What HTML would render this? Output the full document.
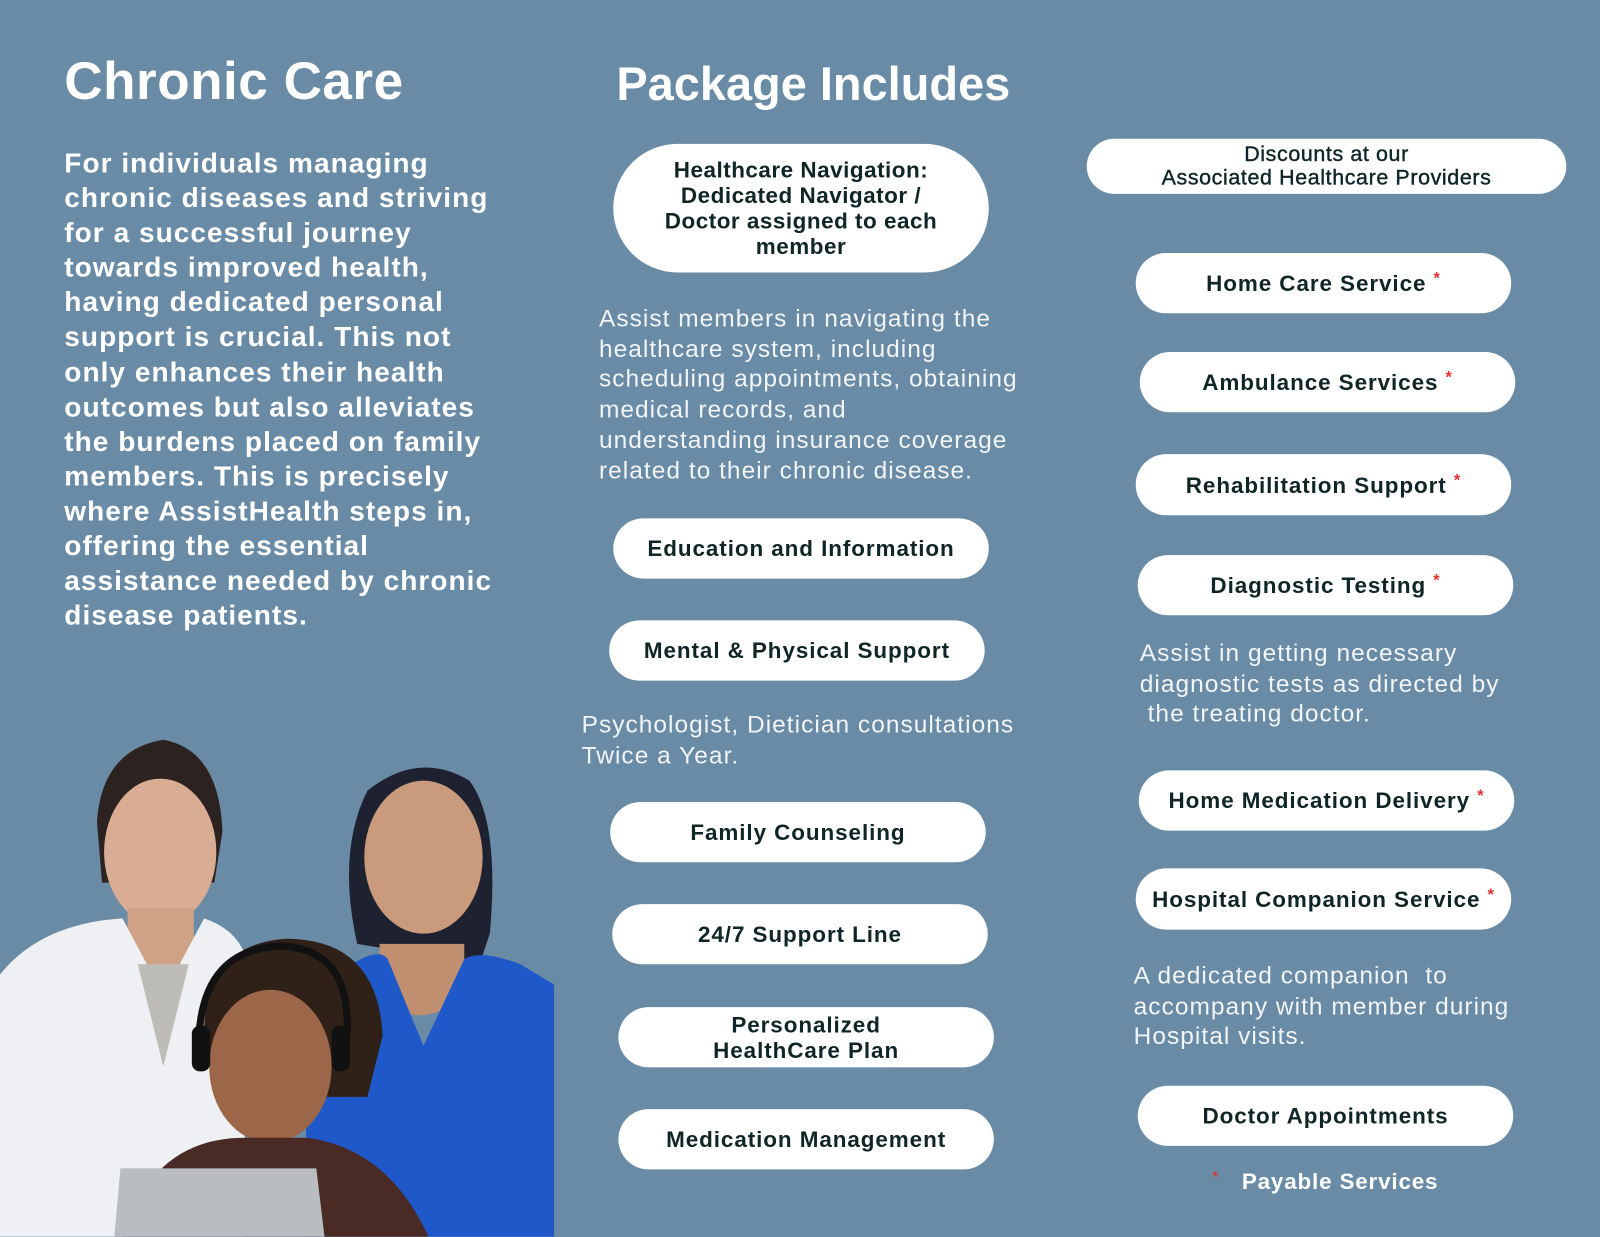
<!DOCTYPE html>
<html><head><meta charset="utf-8"><style>
html,body{margin:0;padding:0;width:1600px;height:1236px;overflow:hidden;background:#698ba5;}
#w{position:absolute;left:0;top:0;width:1568px;height:1212px;transform:scale(1.0204);transform-origin:0 0;font-family:"Liberation Sans",sans-serif;}
.a{position:absolute;}
h1{position:absolute;margin:0;color:#fff;font-weight:bold;}
.p{position:absolute;background:#fff;border-radius:32px;color:#0f2526;font-weight:bold;font-size:22px;display:flex;align-items:center;justify-content:center;text-align:center;line-height:25px;letter-spacing:0.9px;}
.p i{color:#e53030;font-style:normal;font-size:16px;margin-left:7px;position:relative;top:-4px;}
.t{position:absolute;color:#f2f5f8;font-size:24px;line-height:29.7px;letter-spacing:1px;}
</style></head><body><div id="w">
<h1 style="left:63px;top:50px;font-size:52px;letter-spacing:0.5px">Chronic Care</h1>
<div class="a" style="left:63px;top:143px;width:432px;color:#fff;font-weight:bold;font-size:27.5px;line-height:34.1px;letter-spacing:1px;">For individuals managing chronic diseases and striving for a successful journey towards improved health, having dedicated personal support is crucial. This not only enhances their health outcomes but also alleviates the burdens placed on family members. This is precisely where AssistHealth steps in, offering the essential assistance needed by chronic disease patients.</div>
<h1 style="left:604px;top:55px;font-size:46px;letter-spacing:0px">Package Includes</h1>

<div class="p" style="left:601px;top:141px;width:368px;height:126px;border-radius:63px;line-height:25px;letter-spacing:0.5px">Healthcare Navigation:<br>Dedicated Navigator /<br>Doctor assigned to each<br>member</div>
<div class="t" style="left:587px;top:298px;width:425px">Assist members in navigating the healthcare system, including scheduling appointments, obtaining medical records, and<br>understanding insurance coverage related to their chronic disease.</div>
<div class="p" style="left:601px;top:508px;width:368px;height:59px">Education and Information</div>
<div class="p" style="left:597px;top:608px;width:368px;height:59px">Mental &amp; Physical Support</div>
<div class="t" style="left:570px;top:696px;width:440px">Psychologist, Dietician consultations Twice a Year.</div>
<div class="p" style="left:598px;top:786px;width:368px;height:59px">Family Counseling</div>
<div class="p" style="left:600px;top:886px;width:368px;height:59px">24/7 Support Line</div>
<div class="p" style="left:606px;top:987px;width:368px;height:59px">Personalized<br>HealthCare Plan</div>
<div class="p" style="left:606px;top:1087px;width:368px;height:59px">Medication Management</div>

<div class="p" style="left:1065px;top:136px;width:470px;height:54px;font-weight:normal;font-size:21px;line-height:23px;letter-spacing:0.6px;-webkit-text-stroke:0.4px #0f2526">Discounts at our<br>Associated Healthcare Providers</div>
<div class="p" style="left:1113px;top:248px;width:368px;height:59px">Home Care Service<i>*</i></div>
<div class="p" style="left:1117px;top:345px;width:368px;height:59px">Ambulance Services<i>*</i></div>
<div class="p" style="left:1113px;top:445px;width:368px;height:60px">Rehabilitation Support<i>*</i></div>
<div class="p" style="left:1115px;top:544px;width:368px;height:59px">Diagnostic Testing<i>*</i></div>
<div class="t" style="left:1117px;top:626px;width:375px">Assist in getting necessary diagnostic tests as directed by &nbsp;the treating doctor.</div>
<div class="p" style="left:1116px;top:755px;width:368px;height:59px">Home Medication Delivery<i>*</i></div>
<div class="p" style="left:1113px;top:851px;width:368px;height:60px">Hospital Companion Service<i>*</i></div>
<div class="t" style="left:1111px;top:942px;width:392px">A dedicated companion &nbsp;to accompany with member during Hospital visits.</div>
<div class="p" style="left:1115px;top:1064px;width:368px;height:59px">Doctor Appointments</div>
<div class="a" style="left:1188px;top:1146px;color:#e53030;font-size:16px">*</div>
<div class="a" style="left:1217px;top:1145px;color:#fff;font-weight:bold;font-size:22px;letter-spacing:0.8px">Payable Services</div>

<svg class="a" style="left:0;top:715px" width="545" height="497" viewBox="0 0 545 497">
 <path d="M350 210 Q330 120 360 60 Q410 20 460 50 Q490 90 480 200 L470 230 Z" fill="#1e2230"/>
 <ellipse cx="415" cy="125" rx="58" ry="75" fill="#c99a7c"/>
 <path d="M372 210 L372 260 Q410 300 455 260 L455 210 Z" fill="#bf8f70"/>
 <path d="M330 240 Q370 210 380 225 L415 310 L455 225 Q470 215 510 230 L543 250 L543 497 L300 497 L300 300 Z" fill="#1f58c9"/>
 <path d="M95 90 Q100 20 160 10 Q215 20 218 100 L210 150 L100 150 Z" fill="#2c2220"/>
 <ellipse cx="157" cy="120" rx="55" ry="72" fill="#d9ad93"/>
 <path d="M125 175 L125 220 Q155 250 190 220 L190 175 Z" fill="#cfa185"/>
 <path d="M0 240 Q40 190 120 185 L160 260 L200 185 Q230 195 240 220 L240 497 L0 497 Z" fill="#eef0f3"/>
 <path d="M135 230 L160 330 L185 230 Z" fill="#bdbcb6"/>
 <path d="M200 290 Q205 210 280 205 Q370 205 375 300 L360 360 L210 360 Z" fill="#2f2018"/>
 <ellipse cx="265" cy="330" rx="60" ry="75" fill="#9c6748"/>
 <path d="M195 300 Q200 215 275 212 Q345 215 340 300" fill="none" stroke="#111" stroke-width="7"/>
 <rect x="188" y="290" width="18" height="45" rx="8" fill="#111"/>
 <rect x="325" y="290" width="18" height="45" rx="8" fill="#111"/>
 <path d="M120 497 Q150 400 240 400 L300 400 Q380 410 420 497 Z" fill="#4a2a25"/>
 <path d="M118 430 L310 430 L318 497 L112 497 Z" fill="#b9bcc0"/>
</svg>
</div></body></html>
